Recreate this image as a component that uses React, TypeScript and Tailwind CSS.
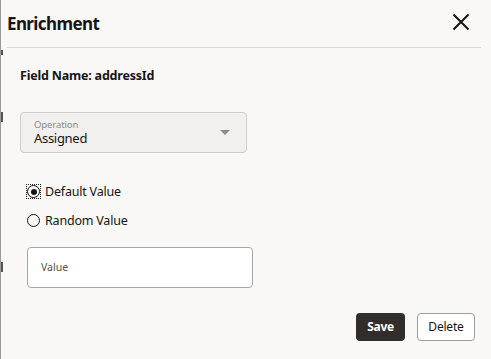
import React from "react";

export default function App() {
  return (
    <div
      className="relative w-[491px] h-[359px] bg-[#f9f8f6] border-l border-[#9a9a9a] text-[#161513] overflow-hidden"
      style={{ fontFamily: '"Noto Sans", "Open Sans", sans-serif' }}
    >
      {/* tiny marks on left edge */}
      <div className="absolute left-0 top-[50px] w-[2px] h-[5px] bg-[#555]" />
      <div className="absolute left-0 top-[112px] w-[2px] h-[10px] bg-[#555]" />
      <div className="absolute left-0 top-[262px] w-[2px] h-[10px] bg-[#555]" />

      <div className="flex items-center justify-between h-[48px] ml-[6px] mr-[10px] border-b border-[#dcdad6]">
        <div className="text-[17px] font-bold leading-none tracking-[-0.6px]">Enrichment</div>
        <svg width="20" height="20" viewBox="0 0 20 20" className="mr-[10px] mb-[3px]">
          <path d="M2.5 2.5 L17.5 17.5 M17.5 2.5 L2.5 17.5" stroke="#161513" strokeWidth="2" />
        </svg>
      </div>

      <div className="pl-[19px]">
        <div className="mt-[19px] text-[12.5px] font-bold leading-[18px] tracking-[-0.2px]">Field Name: addressId</div>

        <div className="mt-[27px] w-[227px] h-[41px] rounded-[4px] border border-[#cfcdc9] bg-[#f1f0ee] flex items-center justify-between pl-[13px] pr-[16px]">
          <div className="flex flex-col">
            <span className="text-[9.5px] leading-[12px] text-[#8d8b87] tracking-[-0.1px]">Operation</span>
            <span className="text-[13px] leading-[15px] text-[#161513] tracking-[-0.3px]">Assigned</span>
          </div>
          <svg width="10" height="6" viewBox="0 0 10 6">
            <path d="M0 0 L10 0 L5 5 Z" fill="#8d8b87" />
          </svg>
        </div>

        <div className="mt-[30px] ml-[6px] flex flex-col gap-[12px]">
          <div className="flex items-center h-[17px]">
            <div className="w-[15px] h-[15px] flex items-center justify-center border border-dotted border-[#222]">
              <div className="w-[13px] h-[13px] rounded-full border-[1.5px] border-[#161513] flex items-center justify-center">
                <div className="w-[6px] h-[6px] rounded-full bg-[#161513]" />
              </div>
            </div>
            <span className="ml-[4px] text-[12.5px] leading-[17px] tracking-[-0.2px]">Default Value</span>
          </div>
          <div className="flex items-center h-[17px]">
            <div className="w-[15px] h-[15px] flex items-center justify-center">
              <div className="w-[13px] h-[13px] rounded-full border-[1.5px] border-[#161513]" />
            </div>
            <span className="ml-[4px] text-[12.5px] leading-[17px] tracking-[-0.2px]">Random Value</span>
          </div>
        </div>

        <div className="mt-[18px] ml-[7px] w-[226px] h-[41px] rounded-[4px] border border-[#a8a6a2] bg-white flex items-center pl-[13px]">
          <span className="text-[10.5px] text-[#55534f]">Value</span>
        </div>
      </div>

      <div className="flex justify-end gap-[12px] mt-[25px] mr-[16px]">
        <button className="w-[49px] h-[28px] rounded-[4px] bg-[#312d2a] text-white text-[12px] font-bold tracking-[-0.3px]">Save</button>
        <button className="w-[58px] h-[28px] rounded-[4px] border border-[#9e9c98] bg-white text-[12px] text-[#161513] tracking-[-0.2px]">Delete</button>
      </div>
    </div>
  );
}
